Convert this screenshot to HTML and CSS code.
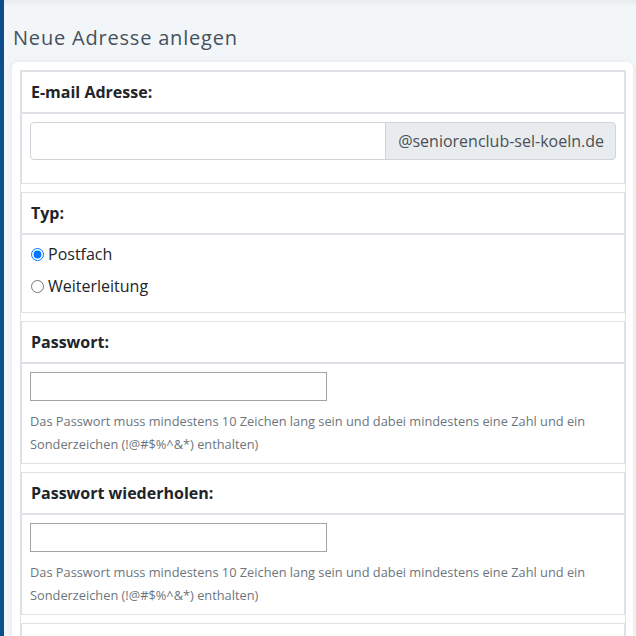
FILE: index.html
```html
<!DOCTYPE html>
<html lang="de">
<head>
    <meta charset="UTF-8">
    <meta name="viewport" content="width=device-width, initial-scale=1.0">
    <title>Neue Adresse anlegen</title>
    <link rel="stylesheet" href="styles.css">
</head>
<body>
    <div class="page">
        <div class="sidebar-edge"></div>
        <div class="main">
            <h1 class="page-title">Neue Adresse anlegen</h1>
            <div class="card">
                <form class="form-table">
                    <div class="section">
                        <div class="section-head">E-mail Adresse:</div>
                        <div class="section-body">
                            <div class="input-group">
                                <input type="text" class="form-control">
                                <span class="input-addon">@seniorenclub-sel-koeln.de</span>
                            </div>
                        </div>
                    </div>
                    <div class="section">
                        <div class="section-head">Typ:</div>
                        <div class="section-body radio-list">
                            <label class="radio-row">
                                <input type="radio" name="typ" value="postfach" checked>
                                <span>Postfach</span>
                            </label>
                            <label class="radio-row">
                                <input type="radio" name="typ" value="weiterleitung">
                                <span>Weiterleitung</span>
                            </label>
                        </div>
                    </div>
                    <div class="section">
                        <div class="section-head">Passwort:</div>
                        <div class="section-body">
                            <input type="password" class="plain-input">
                            <p class="help-text">Das Passwort muss mindestens 10 Zeichen lang sein und dabei mindestens eine Zahl und ein Sonderzeichen (!@#$%^&amp;*) enthalten)</p>
                        </div>
                    </div>
                    <div class="section">
                        <div class="section-head">Passwort wiederholen:</div>
                        <div class="section-body">
                            <input type="password" class="plain-input">
                            <p class="help-text">Das Passwort muss mindestens 10 Zeichen lang sein und dabei mindestens eine Zahl und ein Sonderzeichen (!@#$%^&amp;*) enthalten)</p>
                        </div>
                    </div>
                    <div class="section">
                        <div class="section-head">&nbsp;</div>
                    </div>
                </form>
            </div>
        </div>
    </div>
</body>
</html>
```

FILE: styles.css
```css
html {
    box-sizing: border-box;
}
*, *::before, *::after {
    box-sizing: inherit;
}
body {
    margin  : 0;
    height  : 636px;
    overflow: hidden;

    font-family: "Open Sans", "Liberation Sans", sans-serif;
    color      : #212529;
    background-color: #f3f6f9;
}
.page {
    display: flex;
    height : 100%;
}
.sidebar-edge {
    width: 4px;
    flex-shrink: 0;

    background-color: #0c4e8d;
}
.main {
    flex: 1;
    padding: 26px 3px 0 8px;

    background: linear-gradient(#e7ebef, #f3f6f9 7px);
}
.page-title {
    margin: 0 0 12px 1px;

    font-family   : "Open Sans", "Liberation Sans", sans-serif;
    font-size     : 20px;
    font-weight   : 400;
    line-height   : 24px;
    letter-spacing: 0.8px;
    color         : #45515d;
}
.card {
    height : 600px;
    padding: 8px 7px 0 8px;

    background-color: #fff;
    border-radius   : 6px;
    box-shadow      : 0 0 6px rgba(0, 0, 0, 0.07);
}
.form-table {
    border      : 1px solid #dee2e6;
    border-bottom: none;
}
.section {
    border       : 1px solid #dee2e6;
    margin-bottom: 8px;
}
.form-table .section:first-child {
    margin-top: -1px;
    border-top-width: 2px;
}
.section-head {
    padding: 8px 9px;

    font-size  : 16px;
    font-weight: 700;
    line-height: 24px;

    border-bottom: 2px solid #dee2e6;
}
.section-body {
    padding: 8px 8px 7px 8px;
}
.input-group {
    display: flex;
    margin-bottom: 16px;
}
.form-control {
    flex  : 1;
    height: 38px;
    margin: 0;
    padding: 6px 12px;

    font: inherit;
    border       : 1px solid #ced4da;
    border-radius: 4px 0 0 4px;
}
.input-addon {
    padding: 6px 11px 6px 12px;
    margin-left: -1px;

    font-size  : 16px;
    line-height: 24px;
    color      : #495057;
    background-color: #e9ecef;

    border       : 1px solid #ced4da;
    border-radius: 0 4px 4px 0;
}
.radio-list {
    display: flex;
    flex-direction: column;
    row-gap: 8px;

    padding-top   : 7px;
    padding-bottom: 14px;
}
.radio-row {
    display    : flex;
    align-items: center;
    height     : 24px;

    font-size: 16px;
    color    : #212529;
}
.radio-row input {
    width : 13px;
    height: 13px;
    margin: 1px 4px 0 1px;
}
.plain-input {
    display: block;
    width  : 297px;
    height : 29px;
    margin : 0;

    border: 1px solid #a3a3a3;
}
.help-text {
    margin: 9px 0 0 0;

    font-size  : 12.8px;
    line-height: 23px;
    color      : #6c757d;
}
```
